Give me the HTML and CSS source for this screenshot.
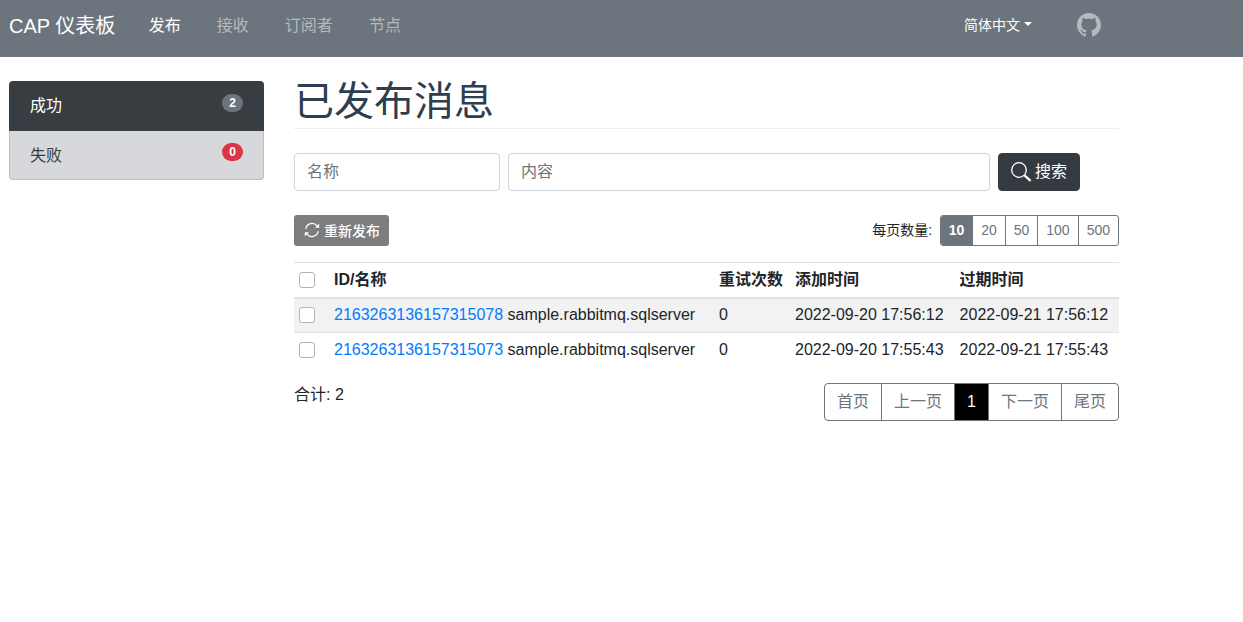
FILE: index.html
```html
<!DOCTYPE html>
<html lang="zh-CN">
<head>
<meta charset="utf-8">
<title>CAP 仪表板</title>
<link rel="stylesheet" href="styles.css">
</head>
<body>
<nav class="navbar">
  <a class="brand">CAP 仪表板</a>
  <ul class="nav-list">
    <li class="nav-link active">发布</li>
    <li class="nav-link">接收</li>
    <li class="nav-link">订阅者</li>
    <li class="nav-link">节点</li>
  </ul>
  <div class="lang">简体中文<span class="caret"></span></div>
  <svg class="github" viewBox="0 0 16 16" width="24" height="24" aria-hidden="true"><path fill="currentColor" d="M8 0C3.58 0 0 3.58 0 8c0 3.54 2.29 6.53 5.47 7.59.4.07.55-.17.55-.38 0-.19-.01-.82-.01-1.49-2.01.37-2.53-.49-2.69-.94-.09-.23-.48-.94-.82-1.13-.28-.15-.68-.52-.01-.53.63-.01 1.08.58 1.23.82.72 1.21 1.87.87 2.33.66.07-.52.28-.87.51-1.07-1.78-.2-3.64-.89-3.64-3.95 0-.87.31-1.59.82-2.15-.08-.2-.36-1.02.08-2.12 0 0 .67-.21 2.2.82.64-.18 1.32-.27 2-.27s1.36.09 2 .27c1.53-1.04 2.2-.82 2.2-.82.44 1.1.16 1.92.08 2.12.51.56.82 1.27.82 2.15 0 3.07-1.87 3.75-3.65 3.95.29.25.54.73.54 1.48 0 1.07-.01 1.93-.01 2.2 0 .21.15.46.55.38A8.01 8.01 0 0 0 16 8c0-4.42-3.58-8-8-8z"/></svg>
</nav>
<div class="page">
  <aside class="sidebar">
    <div class="side-item side-active"><span>成功</span><span class="badge badge-gray">2</span></div>
    <div class="side-item side-plain"><span>失败</span><span class="badge badge-red">0</span></div>
  </aside>
  <main class="main">
    <h1 class="title">已发布消息</h1>
    <form class="search">
      <input class="field field-name" placeholder="名称">
      <input class="field field-content" placeholder="内容">
      <button type="button" class="search-btn">
        <svg class="search-icon" viewBox="0 0 21 20" width="21" height="20" fill="none" stroke="currentColor" aria-hidden="true"><circle cx="8" cy="8" r="7.3" stroke-width="1.3"/><path d="M13.2 13.2l6.4 5.6" stroke-width="2.3"/></svg>
        <span class="search-text">搜索</span>
      </button>
    </form>
    <div class="toolbar">
      <button type="button" class="republish">
        <svg viewBox="0 0 16 16" width="16" height="16" fill="none" stroke="currentColor" stroke-width="1.2" aria-hidden="true"><path d="M1.8 6.8A6.3 6.3 0 0 1 13 3.9"/><path d="M14.2 9.2A6.3 6.3 0 0 1 3 12.1"/><path d="M15.2 1.6v4.2H11z" fill="currentColor" stroke="none"/><path d="M.8 14.4v-4.2H5z" fill="currentColor" stroke="none"/></svg>
        <span>重新发布</span>
      </button>
      <div class="pager-size">
        <span class="size-label">每页数量:</span>
        <div class="size-group">
          <span class="size size-on">10</span><span class="size">20</span><span class="size">50</span><span class="size">100</span><span class="size">500</span>
        </div>
      </div>
    </div>
    <table class="table">
      <thead>
        <tr><th class="c-check"><span class="check"></span></th><th class="c-name">ID/名称</th><th class="c-retry">重试次数</th><th class="c-time">添加时间</th><th class="c-time">过期时间</th></tr>
      </thead>
      <tbody>
        <tr class="row-hover"><td class="c-check"><span class="check"></span></td><td class="c-name"><a class="link">2163263136157315078</a> sample.rabbitmq.sqlserver</td><td>0</td><td>2022-09-20 17:56:12</td><td>2022-09-21 17:56:12</td></tr>
        <tr><td class="c-check"><span class="check"></span></td><td class="c-name"><a class="link">2163263136157315073</a> sample.rabbitmq.sqlserver</td><td>0</td><td>2022-09-20 17:55:43</td><td>2022-09-21 17:55:43</td></tr>
      </tbody>
    </table>
    <div class="footer-row">
      <span class="total">合计: 2</span>
      <div class="pagination">
        <span class="page-link">首页</span><span class="page-link">上一页</span><span class="page-link page-on">1</span><span class="page-link">下一页</span><span class="page-link">尾页</span>
      </div>
    </div>
  </main>
</div>
</body>
</html>
```
FILE: styles.css
```css
* { box-sizing: border-box; }
html, body { margin: 0; padding: 0; }
body {
  font-family: "Liberation Sans", "Noto Sans CJK SC", sans-serif;
  font-size: 16px;
  line-height: 1.5;
  color: #212529;
  background: #fff;
}
.navbar {
  display: flex;
  align-items: center;
  height: 57px;
  padding: 0 0 5px 9px;
  background: #6c757d;
}
.brand { font-size: 20px; color: #fff; margin-right: 16px; padding-right: 1.5px; }
.nav-list { display: flex; list-style: none; margin: 0; padding: 0; flex: 1; }
.nav-link { padding: 0 8px; margin: 0 12px 0 8px; color: rgba(255,255,255,.5); }
.nav-link.active { color: #fff; }
.lang { display: flex; align-items: center; font-size: 14px; color: #fff; margin-right: 45px; margin-top: -2px; }
.caret {
  margin-left: 4px;
  margin-top: -2px;
  border-top: 4px solid #fff;
  border-left: 4px solid transparent;
  border-right: 4px solid transparent;
}
.github { color: rgba(255,255,255,.5); margin-right: 142px; margin-top: -3px; }
.page { display: flex; align-items: flex-start; padding: 24px 124px 0 9px; }
.sidebar {
  width: 255px;
  flex: none;
  margin-right: 30px;
}
.side-item {
  display: flex;
  justify-content: space-between;
  height: 49px;
  padding: 13px 21px 0;
}
.side-active {
  height: 50px;
  border-radius: 4px 4px 0 0;
  background: #383d41;
  color: #fff;
}
.side-plain {
  padding: 13px 20px 0;
  border: solid #bdbec1;
  border-width: 0 1px 1px;
  border-radius: 0 0 4px 4px;
  background: #d6d8db;
  color: #383d41;
}
.badge {
  height: 18px;
  min-width: 21px;
  padding: 0 7px;
  border-radius: 10px;
  font-size: 12px;
  font-weight: 700;
  line-height: 18px;
  color: #fff;
  text-align: center;
}
.side-plain .badge { margin-top: -1px; }
.badge-gray { background: #6c757d; }
.badge-red { background: #dc3545; }
.main { flex: 1; min-width: 0; }
.title {
  margin: 0 0 24px;
  height: 48px;
  border-bottom: 1px solid #eee;
  font-size: 40px;
  font-weight: 400;
  line-height: 40px;
  color: #2c3e50;
}
.search { display: flex; gap: 8px; margin-bottom: 24px; }
.field {
  height: 38px;
  padding: 6px 12px;
  border: 1px solid #ced4da;
  border-radius: 4px;
  font: inherit;
  color: #495057;
  outline: none;
}
.field::placeholder { color: #6c757d; opacity: 1; }
.field-name { width: 206px; }
.field-content { width: 482px; }
.search-btn {
  display: flex;
  align-items: center;
  gap: 3px;
  width: 82px;
  height: 38px;
  padding: 0 12px;
  border: 1px solid #343a40;
  border-radius: 4px;
  background: #343a40;
  color: #fff;
  font: inherit;
  white-space: nowrap;
}
.search-icon { flex: none; margin-top: -1px; }
.toolbar { display: flex; justify-content: space-between; align-items: center; margin-bottom: 16px; }
.republish {
  display: flex;
  align-items: center;
  gap: 4px;
  height: 31px;
  width: 95px;
  padding: 0 0 2px 10px;
  border: 0;
  border-radius: 3px;
  background: #7b7d7f;
  color: #fff;
  font-family: inherit;
  font-size: 14px;
  font-weight: 500;
}
.pager-size { display: flex; align-items: center; font-size: 14px; color: #212529; }
.size-label { margin-right: 8px; }
.size-group { display: flex; border: 1px solid #6c757d; border-radius: 3px; overflow: hidden; }
.size {
  height: 29px;
  padding: 0 8px;
  border-left: 1px solid #6c757d;
  font-size: 14px;
  line-height: 29px;
  color: #6c757d;
}
.size:first-child { border-left: 0; }
.size-on { width: 31px; padding: 0; text-align: center; background: #6c757d; color: #fff; font-weight: 700; }
.table { width: 825px; border-collapse: collapse; table-layout: fixed; margin-bottom: 15px; }
.table th, .table td { padding: 0; text-align: left; vertical-align: middle; border-top: 1px solid #dee2e6; white-space: nowrap; }
.table th { height: 35px; border-bottom: 2px solid #dee2e6; font-weight: 700; }
.table td { height: 35px; }
.table th:nth-child(1) { width: 40px; }
.table th:nth-child(2) { width: 385px; }
.table th:nth-child(3) { width: 76px; }
.table th:nth-child(4) { width: 164.6px; }
.row-hover { background: #f2f2f2; }
.c-check { padding-left: 5px !important; }
.check {
  display: block;
  width: 16px;
  height: 16px;
  border: 1px solid #adb5bd;
  border-radius: 3px;
  background: #fff;
}
.link { color: #007bff; }
.footer-row { display: flex; justify-content: space-between; align-items: flex-start; }
.pagination { display: flex; border: 1px solid #6c757d; border-radius: 4px; overflow: hidden; }
.page-link {
  height: 36px;
  padding: 0 12px;
  border-left: 1px solid #6c757d;
  line-height: 36px;
  color: #6c757d;
}
.page-link:first-child { border-left: 0; }
.page-on { background: #000; color: #fff; }
```
